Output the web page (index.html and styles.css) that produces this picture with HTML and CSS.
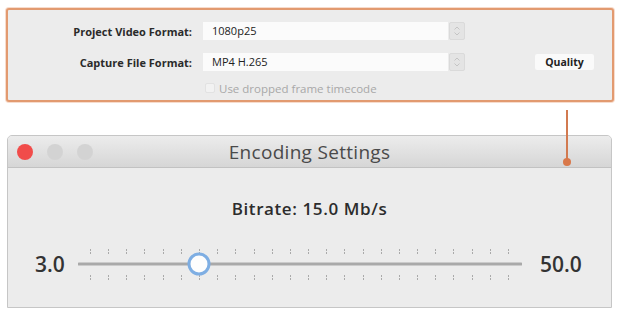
FILE: index.html
```html
<!DOCTYPE html>
<html lang="en">
<head>
    <meta charset="UTF-8">
    <title>Encoding Settings</title>
    <link rel="stylesheet" href="styles.css">
</head>
<body>
<div class="page">
    <div class="panel">
        <div class="row">
            <span class="label">Project Video Format:</span>
            <span class="field">1080p25</span>
            <span class="stepper">
                <svg width="14" height="16" viewBox="0 0 14 16"><path d="M4.5 6.5l2.5-2.5 2.5 2.5M4.5 9.5l2.5 2.5 2.5-2.5" fill="none" stroke="#c4c4c4" stroke-width="1"/></svg>
            </span>
        </div>
        <div class="row">
            <span class="label">Capture File Format:</span>
            <span class="field">MP4 H.265</span>
            <span class="stepper">
                <svg width="14" height="16" viewBox="0 0 14 16"><path d="M4.5 6.5l2.5-2.5 2.5 2.5M4.5 9.5l2.5 2.5 2.5-2.5" fill="none" stroke="#c4c4c4" stroke-width="1"/></svg>
            </span>
            <span class="btn-quality">Quality</span>
        </div>
        <div class="row-check">
            <span class="check"></span>
            <span class="check-text">Use dropped frame timecode</span>
        </div>
    </div>

    <!--连接线-->
    <div class="connector"><span class="dot"></span></div>

    <div class="window">
        <div class="titlebar">
            <div class="lights">
                <span class="light red"></span>
                <span class="light"></span>
                <span class="light"></span>
            </div>
            <div class="title">Encoding Settings</div>
            <div></div>
        </div>
        <div class="content">
            <div class="bitrate">Bitrate: 15.0 Mb/s</div>
            <div class="slider-row">
                <span class="min">3.0</span>
                <svg class="slider" width="444" height="40" viewBox="0 0 444 40">
                    <path d="M12.5 5v5M30.5 5v5M48.5 5v5M66.5 5v5M85.5 5v5M103.5 5v5M121.5 5v5M139.5 5v5M157.5 5v5M176.5 5v5M194.5 5v5M212.5 5v5M230.5 5v5M248.5 5v5M266.5 5v5M285.5 5v5M303.5 5v5M321.5 5v5M339.5 5v5M357.5 5v5M375.5 5v5M394.5 5v5M412.5 5v5M430.5 5v5" stroke="#aaaaaa" stroke-width="1" stroke-dasharray="2 1"/>
                    <path d="M12.5 31v5M30.5 31v5M48.5 31v5M66.5 31v5M85.5 31v5M103.5 31v5M121.5 31v5M139.5 31v5M157.5 31v5M176.5 31v5M194.5 31v5M212.5 31v5M230.5 31v5M248.5 31v5M266.5 31v5M285.5 31v5M303.5 31v5M321.5 31v5M339.5 31v5M357.5 31v5M375.5 31v5M394.5 31v5M412.5 31v5M430.5 31v5" stroke="#aaaaaa" stroke-width="1" stroke-dasharray="2 1"/>
                    <line x1="1" y1="20" x2="443" y2="20" stroke="#a9a9a9" stroke-width="3" stroke-linecap="round"/>
                    <circle cx="121" cy="20" r="10" fill="#fdfdfd" stroke="#7eaee3" stroke-width="3"/>
                </svg>
                <span class="max">50.0</span>
            </div>
        </div>
    </div>
</div>
</body>
</html>
```
FILE: styles.css
```css
body{
    margin: 0;
    background-color: white;
    font-family: "Open Sans", "Liberation Sans", sans-serif;
    color: #222;
}
.page{
    position: relative;
    width: 618px;
    height: 312px;
}

/*上面的设置面板*/
.panel{
    box-sizing: border-box;
    margin: 8px 4px 0 6px;
    height: 94px;
    padding-top: 12px;
    padding-right: 18px;
    background-color: #ececec;
    border: 2px solid #e29a70;
    border-radius: 3px;
    box-shadow: 0 0 0 1px #f7dccd;
}
.row{
    display: flex;
    align-items: center;
    height: 18px;
    margin-bottom: 13px;
}
.label{
    width: 184px;
    text-align: right;
    font-size: 11px;
    font-weight: bold;
    color: #2a2a2a;
}
.field{
    box-sizing: border-box;
    width: 245px;
    height: 18px;
    margin-left: 11px;
    padding-left: 9px;
    line-height: 18px;
    font-size: 11px;
    background-color: #fbfbfb;
}
.stepper{
    box-sizing: border-box;
    display: flex;
    width: 16px;
    height: 18px;
    margin-left: 1px;
    background-color: #e4e4e4;
    border: 1px solid #dadada;
    border-radius: 2px;
}
.btn-quality{
    margin-left: auto;
    width: 59px;
    height: 16px;
    line-height: 16px;
    text-align: center;
    font-size: 10.5px;
    font-weight: bold;
    background-color: #fafafa;
    border-radius: 2px;
}
.row-check{
    display: flex;
    align-items: center;
    height: 10px;
    margin-top: -1px;
}
.check{
    box-sizing: border-box;
    width: 10px;
    height: 10px;
    margin-left: 197px;
    border: 1px solid #e2e2e2;
    border-radius: 2px;
    background-color: #f2f2f2;
}
.check-text{
    margin-left: 4px;
    font-size: 11.5px;
    color: #a8a8a8;
}

/*连接线*/
.connector{
    position: absolute;
    left: 566px;
    top: 102px;
    width: 2px;
    height: 52px;
    background-color: #d27a50;
}
.dot{
    position: absolute;
    left: -3px;
    bottom: -4px;
    width: 8px;
    height: 8px;
    border-radius: 50%;
    background-color: #d9784a;
}

/*窗口*/
.window{
    box-sizing: border-box;
    margin: 33px 6px 0 7px;
    height: 173px;
    border: 1px solid #c6c6c6;
    border-radius: 5px 5px 0 0;
    background-color: #ececec;
    overflow: hidden;
}
.titlebar{
    display: grid;
    grid-template-columns: 1fr auto 1fr;
    align-items: center;
    height: 31px;
    background: linear-gradient(#ececec, #d6d6d6);
    border-bottom: 1px solid #c2c2c2;
}
.lights{
    display: flex;
    gap: 14px;
    padding-left: 9px;
}
.light{
    width: 16px;
    height: 16px;
    border-radius: 50%;
    background-color: #d3d3d3;
}
.light.red{
    background-color: #f14c4a;
}
.title{
    font-size: 19px;
    letter-spacing: 0.3px;
    color: #4a4a4a;
}
.content{
    padding-top: 29px;
}
.bitrate{
    text-align: center;
    font-size: 17px;
    font-weight: 600;
    letter-spacing: 0.6px;
    color: #2c2c2c;
    line-height: 24px;
}
.slider-row{
    display: flex;
    align-items: center;
    margin-top: 23px;
}
.min, .max{
    font-size: 21px;
    font-weight: 600;
    color: #333;
}
.min{
    margin-left: 27px;
    width: 31px;
}
.slider{
    margin-left: 12px;
}
.max{
    margin-left: 18px;
}
```
